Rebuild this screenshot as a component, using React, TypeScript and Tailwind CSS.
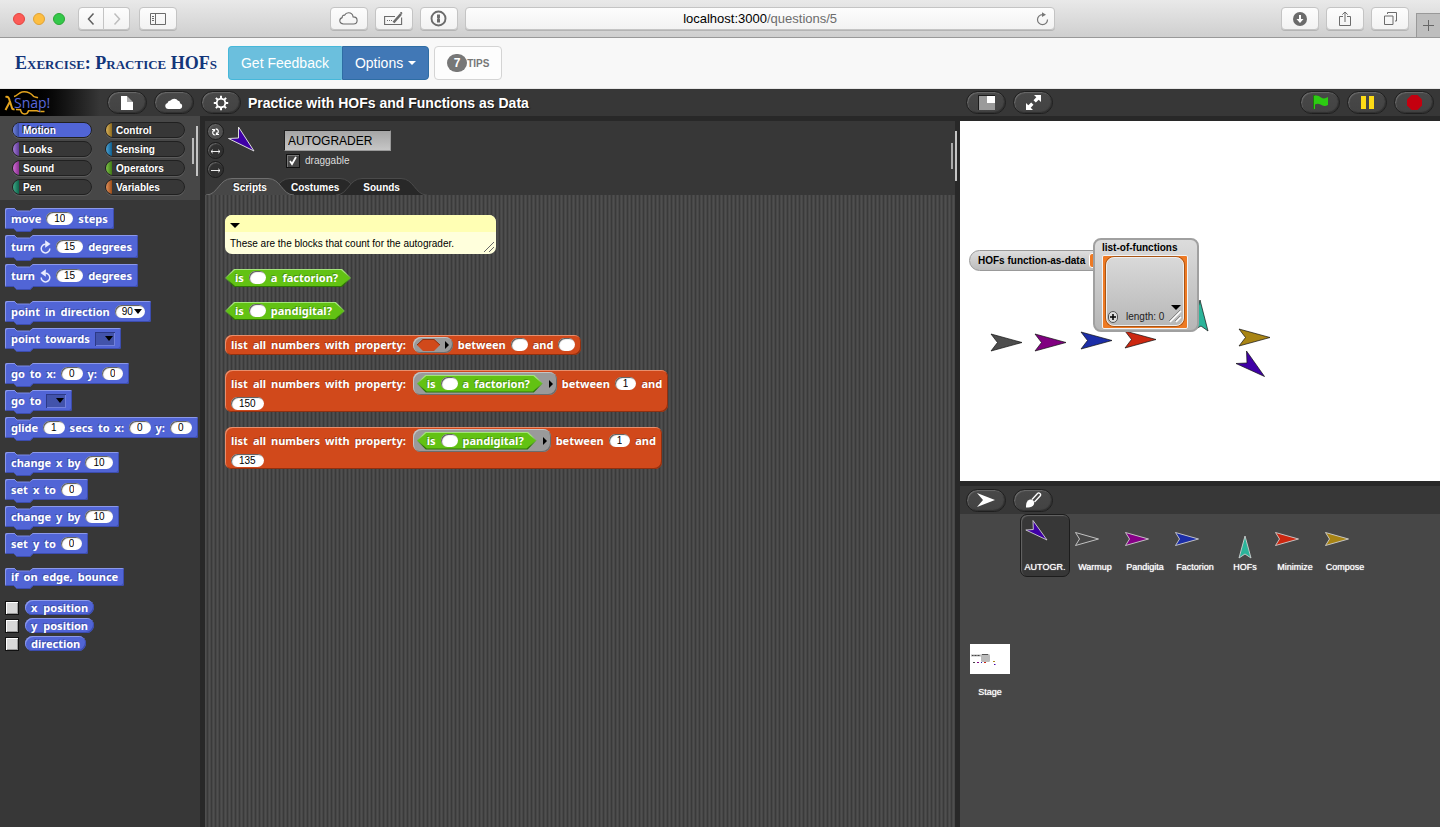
import React, { Fragment, ReactNode } from 'react';

/* ---------- browser chrome ---------- */

const chromeButton =
  'flex h-[23px] items-center justify-center border border-[#c4c4c4] bg-gradient-to-b from-[#fdfdfd] to-[#f2f2f2] text-[#6b6b6b] shadow-[0_1px_0_#b4b4b4]';

function ChromeBar() {
  return (
    <header className="flex h-[38px] items-center border-b border-[#999] bg-gradient-to-b from-[#e9e9e9] to-[#cfcfcf] pl-[13px]">
      <div className="flex gap-2">
        <span className="size-[12px] rounded-full border border-[#e2453f] bg-[#fc5b57]" />
        <span className="size-[12px] rounded-full border border-[#dea236] bg-[#fdbe41]" />
        <span className="size-[12px] rounded-full border border-[#2aa634] bg-[#34c84a]" />
      </div>
      <div className="ml-[13px] flex">
        <button aria-label="Back" className={chromeButton + ' w-[26px] rounded-l'}>
          <svg width="8" height="14" viewBox="0 0 8 14" fill="none" stroke="#5f5f5f" strokeWidth="1.5"><path d="M6.500 1.500 1.500 7l5 5.500" /></svg>
        </button>
        <button aria-label="Forward" className={chromeButton + ' w-[26px] rounded-r border-l-0'}>
          <svg width="8" height="14" viewBox="0 0 8 14" fill="none" stroke="#bdbdbd" strokeWidth="1.5"><path d="M1.500 1.500 6.500 7l-5 5.500" /></svg>
        </button>
      </div>
      <button aria-label="Sidebar" className={chromeButton + ' ml-[9px] w-[38px] rounded'}>
        <svg width="16" height="12" viewBox="0 0 16 12" fill="none" stroke="currentColor"><path d="M.5.5h15v11H.5zM5.500.5v11M2 3.500h2M2 5.500h2M2 7.500h2" /></svg>
      </button>
      <div className="flex-[153]" />
      <div className="flex gap-[7px]">
        <button aria-label="iCloud" className={chromeButton + ' w-[38px] rounded'}>
          <svg width="19" height="13" viewBox="0 0 19 13" fill="none" stroke="currentColor" strokeWidth="1.1"><path d="M4.500 12C2.300 12 .8 10.500.8 8.700c0-1.600 1-2.700 2.400-3.100C3.100 4 4.200 3 5.600 3.200 6.400 1.600 7.800.8 9.500.8c2.500 0 4.300 1.700 4.600 4.100 2.300 0 4 1.500 4 3.600S16.600 12 14.500 12z" /></svg>
        </button>
        <button aria-label="Keyboard" className={chromeButton + ' w-[38px] rounded'}>
          <svg width="19" height="13" viewBox="0 0 19 13" fill="none" stroke="currentColor" strokeWidth="1.100"><path d="M11 4.500H.6v8h17v-7M3 8.500h1M5 8.500h1M7 8.500h1" /><path d="M9.500 10.500 17 2" strokeWidth="2.600" /><path d="m16.500 1.500 1.500-1" strokeWidth="2" /></svg>
        </button>
        <button aria-label="1Password" className={chromeButton + ' w-[38px] rounded'}>
          <svg width="17" height="17" viewBox="0 0 17 17"><circle cx="8.500" cy="8.500" r="7" fill="none" stroke="currentColor" strokeWidth="1.900" /><path d="M7 4.500h3v3.300l-.6.7.6.7v3.300H7V9.300l.6-.8-.6-.7z" fill="currentColor" /></svg>
        </button>
      </div>
      <div className="ml-[7px] flex h-[23px] flex-[580] items-center rounded border border-[#c4c4c4] bg-gradient-to-b from-[#fdfdfd] to-[#f2f2f2] px-[5px] shadow-[0_1px_0_#b4b4b4]">
        <span className="flex-1 pl-[14px] text-center text-[13px] leading-4 text-[#6c6c6c]">
          <span className="text-black">localhost:3000</span>/questions/5
        </span>
        <button aria-label="Reload">
          <svg width="13" height="14" viewBox="0 0 13 14" fill="none" stroke="#777" strokeWidth="1.200"><path d="M6.500 2.600A5 5 0 1 0 11.500 7.500" /><path d="M6 .3v4.600l4-2.200z" fill="#777" stroke="none" /></svg>
        </button>
      </div>
      <div className="flex-[227]" />
      <div className="flex gap-[7px]">
        <button aria-label="Downloads" className={chromeButton + ' w-[38px] rounded'}>
          <svg width="14" height="14" viewBox="0 0 14 14"><circle cx="7" cy="7" r="7" fill="#6b6b6b" /><path d="M6 3h2v4h2.500L7 11 3.500 7H6z" fill="#fff" /></svg>
        </button>
        <button aria-label="Share" className={chromeButton + ' w-[38px] rounded'}>
          <svg width="12" height="16" viewBox="0 0 12 16" fill="none" stroke="currentColor"><path d="M4 5.500H.5v9h11v-9H8M6 11V1.200M3.300 3.600 6 1l2.700 2.600" /></svg>
        </button>
        <button aria-label="Tabs" className={chromeButton + ' w-[38px] rounded'}>
          <svg width="13" height="13" viewBox="0 0 13 13" fill="none" stroke="currentColor"><path d="M.5 4h8.500v8.500H.5zM3.500 2V.5h9V9H11" /></svg>
        </button>
      </div>
      <button aria-label="New tab" className="ml-[7px] flex h-[24px] w-[24px] items-center justify-center self-end border-l border-t border-[#999] bg-[#bebebe]">
        <svg width="11" height="11" viewBox="0 0 11 11" stroke="#666"><path d="M5.500 0v11M0 5.500h11" /></svg>
      </button>
    </header>
  );
}

/* ---------- exercise header ---------- */

function ExerciseHeader() {
  return (
    <div className="flex h-[51px] items-center border-b border-[#e7e7e7] bg-[#f8f8f8] pl-[15px] text-sm leading-5">
      <h1 className="font-['Liberation_Serif',serif] text-[18px] font-bold text-[#12357a] [font-variant:small-caps]">
        Exercise: Practice HOFs
      </h1>
      <button className="ml-[11px] h-[34px] rounded-l border border-[#46b8da] border-r-[#6bbfdd] bg-[#6bbfdd] px-3 text-white">Get Feedback</button>
      <button className="flex h-[34px] items-center gap-[5px] rounded-r border border-[#2e6da4] bg-[#4178b6] px-3 text-white">
        Options
        <svg width="8" height="4" viewBox="0 0 8 4" fill="#fff"><path d="M0 0h8L4 4z" /></svg>
      </button>
      <button className="ml-[5px] flex h-[34px] items-center rounded border border-[#d4d4d4] bg-[#fdfdfd] px-3 text-[#777]">
        <span className="flex h-[18px] w-[20px] items-center justify-center rounded-full bg-[#777] text-[12px] font-bold text-white">7</span>
        <span className="pt-[2px] text-[10px] font-bold">TIPS</span>
      </button>
    </div>
  );
}

/* ---------- toolbar pieces ---------- */

function ToolButton({ label, children }: { label: string; children: ReactNode }) {
  return (
    <button
      aria-label={label}
      className="flex h-[23px] w-[40px] shrink-0 items-center justify-center rounded-full border border-[#1f1f1f] bg-gradient-to-b from-[#484848] to-[#434343] shadow-[inset_1px_1px_1px_#6a6a6a,inset_-1px_-1px_1px_#303030]"
    >
      {children}
    </button>
  );
}

function Logo() {
  return (
    <svg className="shrink-0" width="56" height="26" viewBox="0 0 56 26" aria-label="Snap!">
      <g fill="none" stroke="#e3a41f">
        <path d="M10 6.500C13 6 15 2.500 18 2c4-.6 8.500.8 11.500 4.300 2 1 3 .8 4.500 1.500M12 19.500l4.500.2c.5 3 1.500 4.300 4 4.300s3.500-1.500 4-3.300h8.500c1 .3 1.500.8 2.500.8h5" strokeWidth="1.500" />
        <path d="M1.500 7c3-.8 3.500 1 4.300 4l2.200 7c.3 1.200 1.200 1.600 2.500 1.200M6 11.500 1.500 20" strokeWidth="2" />
      </g>
      <text x="10" y="18" fill="#5a68dc" fontFamily="Open Sans, sans-serif" fontSize="14">Snap!</text>
    </svg>
  );
}

function Toolbar() {
  return (
    <div className="flex h-[27px] bg-[#373737]">
      <div className="flex flex-1 items-center gap-[7px]">
        <div className="flex h-full w-[100px] items-center bg-gradient-to-r from-black from-20% to-[#373737] pl-1">
          <Logo />
        </div>
        <ToolButton label="File">
          <svg width="12" height="14" viewBox="0 0 12 14"><path d="M0 0h6v6h6v8H0z" fill="#fff" /><path d="M6 0v6h6z" fill="#aaa" /></svg>
        </ToolButton>
        <ToolButton label="Cloud">
          <svg width="18" height="12" viewBox="0 0 18 12" fill="#fff"><path d="M3 12a3 3 0 0 1-.5-5.900A3 3 0 0 1 5.500 3.500 4.500 4.500 0 0 1 13 3.800c1.500 0 2 1 2 2.400A3 3 0 0 1 15 12z" /></svg>
        </ToolButton>
        <ToolButton label="Settings">
          <svg width="16" height="16" viewBox="0 0 16 16" fill="none" stroke="#fff"><circle cx="8" cy="8" r="4.200" strokeWidth="2" /><path d="M8 4V.8M8 12v3.200M4 8H.8M12 8h3.200M5.200 5.200 2.900 2.900M10.800 10.800l2.300 2.300M5.200 10.800l-2.300 2.300M10.800 5.200l2.300-2.300" strokeWidth="2" /><circle cx="8" cy="8" r="3.300" fill="#474747" stroke="none" /></svg>
        </ToolButton>
        <h2 className="text-[14px] font-bold leading-5 text-white [text-shadow:1px_1px_1px_#111]">Practice with HOFs and Functions as Data</h2>
      </div>
      <div className="flex w-[480px] items-center gap-[7px] px-[6px]">
        <ToolButton label="Stage size">
          <svg width="17" height="15" viewBox="0 0 17 15"><path d="M0 0h17v15H0z" fill="#1c1c1c" /><path d="M1 1h16v14H1z" fill="#9a9a9a" /><path d="M9 1h8v7H9z" fill="#fff" /></svg>
        </ToolButton>
        <ToolButton label="Full screen">
          <svg width="15" height="15" viewBox="0 0 15 15" fill="#fff"><path d="M15 0v7l-2.300-2.300-2.900 2.800-2.300-2.300 2.800-2.900L8 0zM0 15V8l2.300 2.300 2.900-2.800 2.300 2.300-2.800 2.900L7 15z" /></svg>
        </ToolButton>
        <div className="flex-1" />
        <ToolButton label="Go">
          <svg width="15" height="15" viewBox="0 0 15 15"><path d="M0 0h2v14H0z" fill="#1d7a0c" /><path d="M1 1c3-1 5 0 7 1.500C10.500 4 12.500 3.500 15 2v8c-3 1.500-5 1-7.500-.5C5.500 8.500 4 8.500 2 9.500V14H1z" fill="#2ccc12" /></svg>
        </ToolButton>
        <ToolButton label="Pause">
          <svg width="13" height="13" viewBox="0 0 13 13"><path d="M0 0h5v13H0zM8 0h5v13H8z" fill="#fddb16" /></svg>
        </ToolButton>
        <ToolButton label="Stop">
          <svg width="15" height="15" viewBox="0 0 15 15"><path d="M4.500 0h6L15 4.500v6L10.500 15h-6L0 10.500v-6z" fill="#c4000f" /></svg>
        </ToolButton>
      </div>
    </div>
  );
}

/* ---------- block primitives ---------- */

function Words({ t }: { t: string }) {
  return (
    <>
      {t.split(' ').map((w, i) => (
        <span key={i} className="whitespace-pre [text-shadow:-1px_-1px_0_rgba(0,0,0,0.25)]">{w}</span>
      ))}
    </>
  );
}

function Slot({ v = '' }: { v?: string }) {
  return (
    <input
      aria-label="Block input"
      defaultValue={v}
      className="h-[13px] min-w-[16px] rounded-full bg-white px-[8px] text-center font-['Liberation_Sans',sans-serif] text-[10px] leading-[13px] font-normal text-black shadow-[inset_1px_1px_1px_#555] [field-sizing:content]"
    />
  );
}

function Triangle() {
  return <svg width="8" height="5" viewBox="0 0 8 5"><path d="M0 0h8L4 5z" /></svg>;
}

function NumberMenu({ v }: { v: string }) {
  return (
    <span className="flex h-[13px] items-center gap-px rounded-full bg-white pl-[7px] pr-[3px] shadow-[inset_1px_1px_1px_#555]">
      <input aria-label="Direction" defaultValue={v} className="font-['Liberation_Sans',sans-serif] text-[10px] leading-[13px] font-normal text-black [field-sizing:content]" />
      <Triangle />
    </span>
  );
}

function Menu() {
  return (
    <span className="relative flex h-[14px] w-[20px] items-center">
      <select aria-label="Target" className="size-full appearance-none bg-[#4253ab] shadow-[inset_1px_1px_0_#2c3987,inset_-1px_-1px_0_#7180dc]">
        <option></option>
      </select>
      <span className="pointer-events-none absolute right-[2px] flex"><Triangle /></span>
    </span>
  );
}

function TurnArrow({ flip }: { flip?: boolean }) {
  return (
    <svg width="11" height="14" viewBox="0 0 11 14" fill="none" stroke="#e8ebff" strokeWidth="1.500">
      <g transform={flip ? 'translate(11 0) scale(-1 1)' : undefined}>
        <path d="M9.800 8.500A4.300 4.300 0 1 1 5.600 4.300" />
        <path d="M5.200.3v7.400L10.500 4z" fill="#e8ebff" stroke="none" />
      </g>
    </svg>
  );
}

type Part = string | { slot: string } | { menu: true } | { dir: string } | { turn: 'cw' | 'ccw' };

function parts(list: Part[]) {
  return list.map((p, i) => (
    <Fragment key={i}>
      {typeof p === 'string' ? <Words t={p} />
        : 'slot' in p ? <Slot v={p.slot} />
        : 'menu' in p ? <Menu />
        : 'dir' in p ? <NumberMenu v={p.dir} />
        : <TurnArrow flip={p.turn === 'ccw'} />}
    </Fragment>
  ));
}

const blockFont = "font-['Noto_Sans',sans-serif] text-[11px] font-bold leading-[15px] text-white";

const commandHeights = { short: 'h-[18px] pb-px', normal: 'h-[21px]', tall: 'h-[23px]' };

function Command({ list, size }: { list: Part[]; size: keyof typeof commandHeights }) {
  return (
    <div
      className={
        'relative flex shrink-0 items-center gap-[5px] rounded-[2px] bg-[#5165d6] px-[6px] shadow-[inset_1px_1px_0_#8b98ea,inset_-1px_-1px_0_#3c4cae] ' +
        commandHeights[size]
      }
    >
      <svg className="absolute left-[9px] top-0" width="19" height="4" viewBox="0 0 19 4">
        <path d="M0 0h19l-3 3H3z" fill="#373737" />
        <path d="M0 0l3 3h12.500L19 .5" fill="none" stroke="#7d8be6" />
      </svg>
      <svg className="absolute -bottom-[3px] left-[9px]" width="19" height="4" viewBox="0 0 19 4">
        <path d="M0 0h19v1l-3 3H3L0 1z" fill="#5165d6" />
        <path d="M3 3.500h13L19 .5" fill="none" stroke="#3c4cae" />
      </svg>
      {parts(list)}
    </div>
  );
}

function Predicate({ tail }: { tail: string }) {
  return (
    <div className="bg-gradient-to-b from-[#a4e57a] from-20% to-[#2f7407] to-80% p-px [clip-path:polygon(0_50%,9px_0,calc(100%-9px)_0,100%_50%,calc(100%-9px)_100%,9px_100%)]">
      <div className="flex h-[16px] items-center gap-[5px] bg-[#62c213] pb-px pl-[9px] pr-[12px] [clip-path:polygon(0_50%,9px_0,calc(100%-9px)_0,100%_50%,calc(100%-9px)_100%,9px_100%)]">
        <Words t="is" />
        <Slot />
        <Words t={tail} />
      </div>
    </div>
  );
}

function Ring({ children }: { children?: ReactNode }) {
  return (
    <div className={'ml-[2px] flex items-center rounded-[8px] bg-[#9a9a9a] px-[4px] shadow-[inset_1px_1px_0_#c4c4c4,inset_-1px_-1px_0_#6c6c6c] ' + (children ? 'h-[23px] gap-[6px]' : 'h-[16px] gap-[5px]')}>
      {children ?? <svg width="23" height="12" viewBox="0 0 23 12"><path d="M0 6l6-6h11l6 6-6 6H6z" fill="#d1491b" /><path d="M0 6l6-5.500h11L23 6" fill="none" stroke="#8f3010" /></svg>}
      <svg width="4" height="8" viewBox="0 0 4 8"><path d="M0 0l4 4-4 4z" /></svg>
    </div>
  );
}

function ListReporter({ ring, from, to }: { ring?: string; from: string; to: string }) {
  const shell = 'rounded-[7px] bg-[#d1491b] px-[6px] shadow-[inset_1px_1px_0_#e88e6c,inset_-1px_-1px_0_#8f3010] ';
  return (
    <div className={shell + (ring ? 'h-[42px] pt-[2px]' : 'flex h-[20px] items-center pb-px')}>
      <div className="flex items-center gap-[5px]">
        <Words t="list all numbers with property:" />
        <Ring>{ring && <Predicate tail={ring} />}</Ring>
        <Words t="between" />
        <Slot v={from} />
        <Words t="and" />
        {!ring && <Slot v={to} />}
      </div>
      {ring && <div className="mt-[2px] flex"><Slot v={to} /></div>}
    </div>
  );
}

/* ---------- palette ---------- */

const categories: [string, string][] = [
  ['Motion', 'from-[#7384d9] to-[#34489f]'], ['Control', 'from-[#dcb45a] to-[#8c6a1c]'],
  ['Looks', 'from-[#a67bd8] to-[#5f3a96]'], ['Sensing', 'from-[#4ba4d6] to-[#0a5f90]'],
  ['Sound', 'from-[#d26fd6] to-[#8a2f90]'], ['Operators', 'from-[#7fc548] to-[#3f7a12]'],
  ['Pen', 'from-[#3fa988] to-[#0b664c]'], ['Variables', 'from-[#e2915a] to-[#9c4c15]'],
];

const groups: Part[][][] = [
  [['move', { slot: '10' }, 'steps'], ['turn', { turn: 'cw' }, { slot: '15' }, 'degrees'], ['turn', { turn: 'ccw' }, { slot: '15' }, 'degrees']],
  [['point in direction', { dir: '90' }], ['point towards', { menu: true }]],
  [['go to x:', { slot: '0' }, 'y:', { slot: '0' }], ['go to', { menu: true }], ['glide', { slot: '1' }, 'secs to x:', { slot: '0' }, 'y:', { slot: '0' }]],
  [['change x by', { slot: '10' }], ['set x to', { slot: '0' }], ['change y by', { slot: '10' }], ['set y to', { slot: '0' }]],
  [['if on edge, bounce']],
];

function Palette() {
  return (
    <aside className="flex w-[200px] shrink-0 flex-col overflow-hidden bg-[#373737]">
      <div className="relative grid h-[84px] grid-cols-[80px_80px] content-start gap-x-[13px] gap-y-[3px] bg-[#474747] pl-[12px] pt-[6px]">
        {categories.map(([name, stripe]) => (
          <button
            key={name}
            className={
              'flex h-[16px] items-center gap-[4px] overflow-hidden rounded-full border border-[#202020] text-[10px] font-bold leading-[14px] text-white shadow-[0_1px_0_#5c5c5c] [text-shadow:-1px_-1px_0_#222] ' +
              (name === 'Motion' ? 'bg-[#5165d6]' : 'bg-[#373737]')
            }
          >
            <span className={'h-full w-[6px] bg-gradient-to-r ' + stripe} />
            <span className="pt-px">{name}</span>
          </button>
        ))}
        <span className="absolute right-[6px] top-[22px] h-[26px] w-[2px] bg-[#bbb]" />
        <span className="absolute right-[2px] top-[10px] h-[50px] w-[2px] bg-[#c4c4c4]" />
      </div>
      <div className={'flex flex-col items-start pl-[5px] pt-[8px] ' + blockFont}>
        {groups.map((g, i) => (
          <div key={i} className="mb-[14px] flex flex-col items-start gap-[6px]">
            {g.map((list, j) => (
              <Command key={j} list={list} size={list[0] === 'turn' ? 'tall' : list.length === 1 ? 'short' : 'normal'} />
            ))}
          </div>
        ))}
        <div className="flex flex-col gap-[3px]">
          {['x position', 'y position', 'direction'].map((name) => (
            <label key={name} className="flex h-[15px] items-center gap-[6px]">
              <input type="checkbox" className="size-[14px] appearance-none border border-[#111] bg-[#d8d8d8] shadow-[inset_1px_1px_0_#fff,inset_-1px_-1px_0_#999]" />
              <span className="flex h-[15px] items-center gap-[6px] rounded-full bg-[#5165d6] px-[6px] pb-px shadow-[inset_1px_1px_0_#8b98ea,inset_-1px_-1px_0_#3c4cae]">
                <Words t={name} />
              </span>
            </label>
          ))}
        </div>
      </div>
    </aside>
  );
}

/* ---------- sprite editor ---------- */

function RotationButton({ label, on, children }: { label: string; on?: boolean; children: ReactNode }) {
  return (
    <button
      aria-label={label}
      className={'flex size-[17px] items-center justify-center rounded-full border border-[#1c1c1c] shadow-[inset_1px_1px_1px_#666] ' + (on ? 'bg-[#505050]' : 'bg-[#303030]')}
    >
      <svg width="11" height="11" viewBox="0 0 11 11" fill="none" stroke="#fff">{children}</svg>
    </button>
  );
}

function Tab({ name, w, active, order }: { name: string; w: number; active?: boolean; order: string }) {
  const edge = `M0 17C12 17 13 .5 26 .5H${w - 26}C${w - 13} .5 ${w - 12} 17 ${w} 17`;
  return (
    <button className={'relative -ml-[30px] h-[17px] px-[27px] text-[10px] font-bold leading-[17px] text-white first:ml-0 ' + order}>
      <svg className="absolute left-0 top-0" width={w} height="17" viewBox={`0 0 ${w} 17`}>
        <path d={edge + 'z'} fill={active ? '#474747' : '#282828'} />
        <path d={edge} fill="none" stroke={active ? '#6f6f6f' : '#4a4a4a'} />
      </svg>
      <span className="relative block pt-px [text-shadow:-1px_-1px_0_#222]">{name}</span>
    </button>
  );
}

function SpriteEditor() {
  return (
    <main className="flex min-w-0 flex-1 flex-col">
      <div className="relative flex h-[74px] bg-[#373737]">
        <div className="flex w-[20px] flex-col items-center gap-[2px] pl-px pt-[2px]">
          <RotationButton label="Can rotate" on><path d="M2 3.500h2.500v2M3.800 4.300C1.500 6.500 3 9 5.500 9M7.200 7.700C9.500 5.500 8 3 5.700 2.800M9 8.500H6.500v-2" strokeWidth="1.200" /></RotationButton>
          <RotationButton label="Only left and right"><path d="M1 6.500h9M2.800 4.800 1 6.500l1.800 1.700M8.200 4.800 10 6.500 8.200 8.200" strokeWidth=".9" /></RotationButton>
          <RotationButton label="Do not rotate"><path d="M1 6.500h9M8.200 4.800 10 6.500 8.200 8.200" strokeWidth=".9" /></RotationButton>
        </div>
        <svg className="ml-[2px] mt-[5px]" width="30" height="27" viewBox="0 0 30 27"><path d="M11.500 1 27 25 1.500 12.500l10-.500z" fill="#3f00a6" stroke="#ddd" /></svg>
        <div className="ml-[27px] flex flex-col gap-[3px] pt-[9px]">
          <input aria-label="Sprite name" defaultValue="AUTOGRADER" className="h-[21px] w-[107px] border border-[#202020] border-r-[#999] border-b-[#999] bg-gradient-to-b from-[#a5a5a5] to-[#c6c6c6] px-[3px] text-[12px] text-black" />
          <label className="flex items-center gap-[5px] pl-[2px] text-[10px] leading-[14px] text-[#ddd]">
            <span className="relative flex">
              <input type="checkbox" defaultChecked className="size-[14px] appearance-none border border-[#111] bg-[#474747] shadow-[inset_1px_1px_0_#777]" />
              <svg className="pointer-events-none absolute left-[3px] top-[2px]" width="8" height="10" viewBox="0 0 8 10" fill="none" stroke="#fff" strokeWidth="1.800"><path d="M1 5l2 3L7 1" /></svg>
            </span>
            draggable
          </label>
        </div>
        <nav className="absolute bottom-0 left-px isolate flex">
          <Tab name="Scripts" w={88} active order="z-20" />
          <Tab name="Costumes" w={102} order="z-0" />
          <Tab name="Sounds" w={91} order="z-10" />
        </nav>
        <span className="absolute right-[2px] top-[22px] h-[26px] w-[2px] bg-[#aaa]" />
        <span className="absolute -right-[2px] top-[10px] h-[50px] w-[2px] bg-[#c4c4c4]" />
      </div>
      <div className={'flex flex-1 flex-col items-start gap-[15px] bg-[repeating-linear-gradient(90deg,#4f4f4f_0_1px,#474747_1px_2px,#3a3a3a_2px_3px,#474747_3px_4px)] pl-[20px] pt-[20px] ' + blockFont}>
        <div className="relative w-[271px] overflow-hidden rounded-[7px] bg-[#ffffdc] font-['Liberation_Sans',sans-serif] text-[10px] font-normal text-black">
          <div className="flex h-[17px] items-center bg-[#ffffb4] pl-[5px] pt-[3px]"><svg width="10" height="5" viewBox="0 0 10 5"><path d="M0 0h10L5 5z" /></svg></div>
          <p className="h-[22px] pl-[5px] leading-[23px]">These are the blocks that count for the autograder.</p>
          <svg className="absolute bottom-[2px] right-[2px]" width="11" height="11" viewBox="0 0 11 11" stroke="#666"><path d="M1 11 11 1M6 11l5-5" /></svg>
        </div>
        <Predicate tail="a factorion?" />
        <Predicate tail="pandigital?" />
        <ListReporter from="" to="" />
        <ListReporter ring="a factorion?" from="1" to="150" />
        <ListReporter ring="pandigital?" from="1" to="135" />
      </div>
    </main>
  );
}

/* ---------- stage and corral ---------- */

const turtles: [number, number, string][] = [
  [31, 213, '#4d4d4d'], [75, 213, '#800080'], [121, 211, '#1c2ea8'], [165, 210, '#cc2710'], [279, 208, '#a88414'],
];

function Stage() {
  return (
    <section className="relative h-[360px] overflow-hidden bg-white">
      <svg className="absolute left-0 top-0" width="480" height="360" viewBox="0 0 480 360" stroke="#111" strokeWidth=".7">
        {turtles.map(([x, y, c]) => (
          <path key={x} transform={`translate(${x} ${y})`} d="M0 0 31 8.500 0 17 6.500 8.500z" fill={c} />
        ))}
        <path d="M240 179l8 31-7-5-9 5z" fill="#2cb49a" />
        <path d="M286.500 230 304.500 255.500 276 242.500l11-.500z" fill="#3f00a6" />
      </svg>
      <div className="absolute left-[9px] top-[129px] flex h-[21px] w-[150px] items-center gap-[4px] rounded-full border border-[#999] bg-gradient-to-b from-[#dedede] to-[#bcbcbc] pl-[8px] text-[10px] font-bold text-black">
        <span className="whitespace-nowrap">HOFs function-as-data</span>
        <span className="h-[15px] w-[20px] rounded-[3px] border border-white bg-[#ee7a24]" />
      </div>
      <div className="absolute left-[133px] top-[117px] h-[94px] w-[106px] rounded-[8px] border-2 border-[#a0a0a0] bg-gradient-to-b from-[#dcdcdc] to-[#b6b6b6] px-[7px] text-[10px] leading-[15px] text-black">
        <p className="font-bold">list-of-functions</p>
        <div className="h-[74px] w-[86px] rounded-[2px] border border-[#f4f4f4] bg-[#ee7a24] px-[3px] py-[1px]">
          <div className="flex h-[69px] items-end rounded-[8px] border border-[#eee] bg-gradient-to-b from-[#d9d9d9] to-[#b8b8b8] pb-[2px] pl-px text-[#222] shadow-[0_0_0_1px_#a85516]">
            <button aria-label="Add item" className="flex h-[12px] w-[10px] items-center justify-center rounded-full border border-[#555] bg-[#ddd]">
              <svg width="6" height="6" viewBox="0 0 6 6" stroke="#000" strokeWidth="1.500"><path d="M3 0v6M0 3h6" /></svg>
            </button>
            <span className="pl-[8px] leading-[13px]">length: 0</span>
            <svg className="ml-auto" width="15" height="20" viewBox="0 0 15 20" stroke="#fff" strokeWidth="1.500"><path d="M3 2h10L8 7z" fill="#000" stroke="none" /><path d="M2 19 13 8M8 19l5-5" /><path d="M1 18 12 7M7 18l5-5" stroke="#777" strokeWidth=".8" /></svg>
          </div>
        </div>
      </div>
    </section>
  );
}

const sprites: { name: string; fill: string; kind: 'right' | 'up' | 'diag' }[] = [
  { name: 'AUTOGR.', fill: '#3f00a6', kind: 'diag' },
  { name: 'Warmup', fill: '#474747', kind: 'right' },
  { name: 'Pandigita', fill: '#880088', kind: 'right' },
  { name: 'Factorion', fill: '#1c2ea8', kind: 'right' },
  { name: 'HOFs', fill: '#2cb49a', kind: 'up' },
  { name: 'Minimize', fill: '#cc2710', kind: 'right' },
  { name: 'Compose', fill: '#a88414', kind: 'right' },
];

const shapes = {
  right: 'M.5 17.500 23.500 24 .5 30.500 4.500 24z',
  up: 'M20 21l6 22-6-4-6 4z',
  diag: 'M8 5.500 22 25 .8 15l7.500-.500z',
};

function Corral() {
  return (
    <section className="mt-[5px] flex flex-1 flex-col">
      <div className="flex h-[28px] items-center gap-[7px] bg-[#373737] pl-[6px]">
        <ToolButton label="New sprite">
          <svg width="18" height="14" viewBox="0 0 18 14" fill="#fff"><path d="M0 0l18 7-18 7 6-7z" /></svg>
        </ToolButton>
        <ToolButton label="Paint sprite">
          <svg width="17" height="16" viewBox="0 0 17 16" fill="none" stroke="#fff" strokeWidth="1.300"><path d="M7 7.500 12.500 1.500c1.500-1.500 4 .5 2.800 2.300L9.500 10" /><path d="M1 15.500c0-3 0-5 2-7 2-1.800 4-1 5.500.2 1 1.500 1 3.300-.5 5-1.800 1.800-4 1.800-7 1.800z" fill="#fff" stroke="none" /></svg>
        </ToolButton>
      </div>
      <div className="flex flex-1 bg-[#474747]">
        <button className="flex w-[60px] flex-col items-center justify-center gap-[13px] text-[9px] leading-[11px] text-white [text-shadow:0_0_1px_#fff]">
          <svg width="40" height="30" viewBox="0 0 40 30">
            <path d="M0 0h40v30H0z" fill="#fff" />
            <path d="M1 10.500h11v2H1z" fill="#bbb" /><path d="M2 11.500h8" stroke="#444" strokeDasharray="1 .5" />
            <rect x="11" y="10" width="9" height="8" rx="1.500" fill="#bbb" /><path d="M12 10.500h6" stroke="#555" />
            <path d="M3 18.500h2" stroke="#444" /><path d="M7 18.500h2" stroke="#808" /><path d="M11 18.500h1" stroke="#22a" /><path d="M14 18.500h2" stroke="#c21" /><path d="M23 17.500h2" stroke="#a82" /><path d="M24 20.500h1.500" stroke="#40a" />
          </svg>
          Stage
        </button>
        <ul className="flex flex-wrap items-start">
          {sprites.map((s, i) => (
            <li key={s.name}>
              <button
                className={
                  'flex h-[63px] w-[50px] flex-col items-center rounded-[7px] border ' +
                  (i === 0 ? 'border-[#1c1c1c] bg-[#373737] shadow-[inset_1px_1px_1px_#666]' : 'border-transparent')
                }
              >
                <svg width="40" height="47" viewBox="0 0 40 47"><path d={shapes[s.kind]} fill={s.fill} stroke="#d0d0d0" strokeWidth=".9" /></svg>
                <span className="text-[9px] leading-[11px] text-white [text-shadow:0_0_1px_#fff]">{s.name}</span>
              </button>
            </li>
          ))}
        </ul>
      </div>
    </section>
  );
}

export default function App() {
  return (
    <div className="flex min-h-screen flex-col bg-[#282828] font-['Liberation_Sans',Arial,sans-serif]">
      <ChromeBar />
      <ExerciseHeader />
      <Toolbar />
      <div className="flex flex-1">
        <Palette />
        <div className="flex min-w-0 flex-1 gap-[5px] pl-[5px] pt-[5px]">
          <SpriteEditor />
          <div className="flex w-[480px] shrink-0 flex-col">
            <Stage />
            <Corral />
          </div>
        </div>
      </div>
    </div>
  );
}
